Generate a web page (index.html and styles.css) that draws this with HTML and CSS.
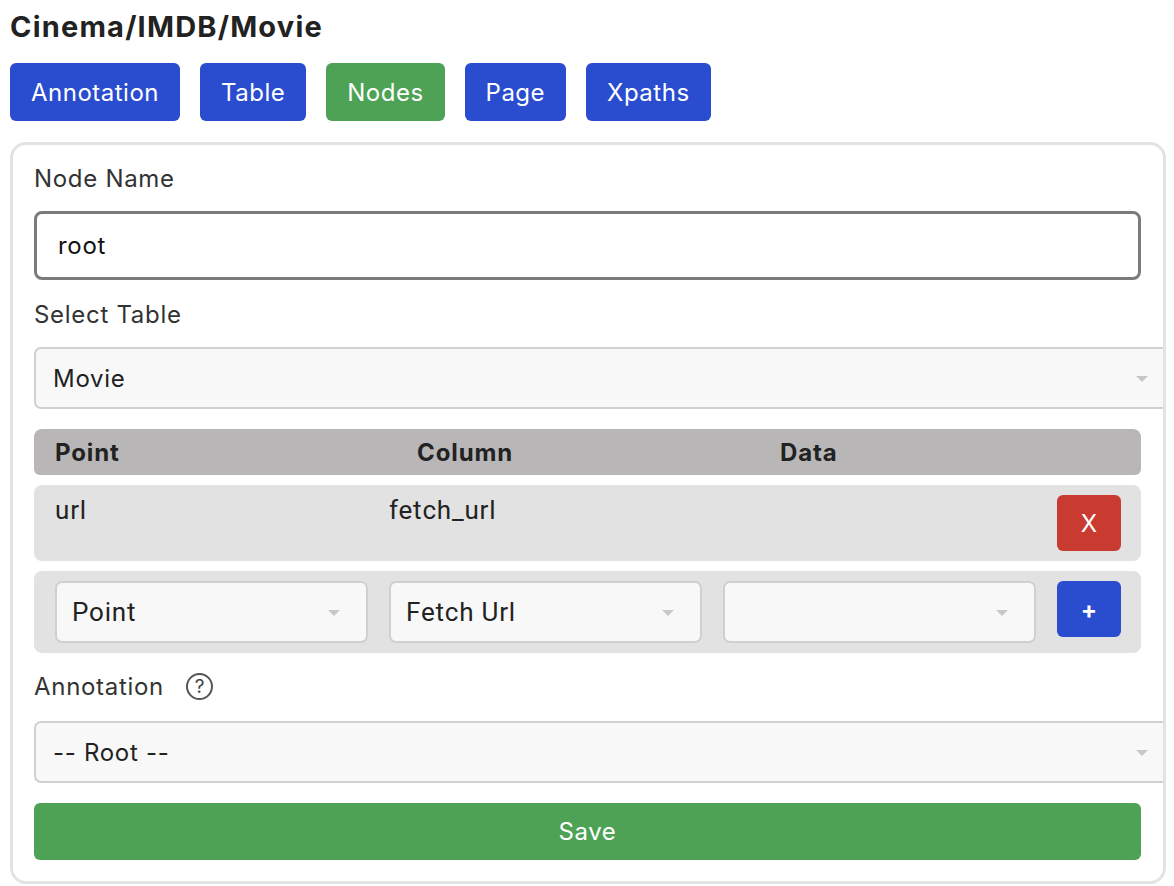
FILE: index.html
```html
<!DOCTYPE html>
<html lang="en">
<head>
<meta charset="utf-8">
<title>Cinema/IMDB/Movie</title>
<link rel="stylesheet" href="styles.css">
</head>
<body>
  <h1 class="title">Cinema/IMDB/Movie</h1>
  <nav class="tabs">
    <button class="btn btn-blue">Annotation</button>
    <button class="btn btn-blue">Table</button>
    <button class="btn btn-green">Nodes</button>
    <button class="btn btn-blue">Page</button>
    <button class="btn btn-blue">Xpaths</button>
  </nav>
  <main class="card">
    <label class="field-label">Node Name</label>
    <div class="text-input">root</div>

    <label class="field-label label-gap">Select Table</label>
    <div class="select select-wide"><span>Movie</span></div>

    <div class="table-head">
      <span>Point</span>
      <span>Column</span>
      <span>Data</span>
    </div>
    <div class="row data-row">
      <span class="cell">url</span>
      <span class="cell">fetch_url</span>
      <span class="cell"></span>
      <button class="sq-btn sq-red">X</button>
    </div>
    <div class="row input-row">
      <div class="select select-small"><span>Point</span></div>
      <div class="select select-small"><span>Fetch Url</span></div>
      <div class="select select-small"><span></span></div>
      <button class="sq-btn sq-blue">+</button>
    </div>

    <div class="field-label annot-label">
      <span>Annotation</span>
      <span class="help">?</span>
    </div>
    <div class="select select-wide"><span>-- Root --</span></div>

    <button class="save">Save</button>
  </main>
</body>
</html>
```

FILE: styles.css
```css
* { box-sizing: border-box; }

body {
  margin: 0;
  padding: 0 8px 0 10px;
  background: #ffffff;
  font-family: Inter, "Noto Sans", sans-serif;
  color: #333;
  letter-spacing: 0.7px;
}

.title {
  margin: 10px 0 0;
  font-size: 29px;
  line-height: 34px;
  font-weight: 700;
  color: #222;
  letter-spacing: 1.2px;
}

.tabs {
  display: flex;
  gap: 20px;
  margin-top: 19px;
}

.btn {
  height: 58px;
  padding: 0 21px;
  border: none;
  border-radius: 6px;
  font-family: Inter, sans-serif;
  font-size: 24px;
  letter-spacing: 0.5px;
  color: #fff;
  cursor: pointer;
}
.btn-blue { background: #2a4ccf; }
.btn-green { background: #4ea255; }

.card {
  margin-top: 21px;
  border: 3px solid #e3e3e3;
  border-radius: 16px;
  padding: 19px 22px 21px 21px;
  overflow: hidden;
  display: flex;
  flex-direction: column;
}

.field-label {
  font-size: 24px;
  line-height: 29px;
  color: #333;
}
.label-gap { margin-top: 20px; }

.text-input {
  margin-top: 18px;
  height: 69px;
  border: 3px solid #7b7b7b;
  border-radius: 8px;
  padding: 0 21px;
  display: flex;
  align-items: center;
  font-size: 24px;
  color: #111;
}

.select {
  position: relative;
  height: 62px;
  background: #f8f8f8;
  border: 2px solid #d0d0d0;
  border-radius: 7px;
  display: flex;
  align-items: center;
  font-size: 24px;
  color: #222;
}
.select::after {
  content: "";
  position: absolute;
  right: 26px;
  top: 50%;
  margin-top: -2px;
  border-left: 6px solid transparent;
  border-right: 6px solid transparent;
  border-top: 6px solid #c8c8c8;
}
.select-wide {
  margin-top: 18px;
  width: calc(100% + 35px);
  padding-left: 17px;
}
.select-small {
  padding-left: 15px;
  font-family: Roboto, sans-serif;
  font-size: 26px;
  letter-spacing: 0.8px;
}

.table-head {
  margin-top: 20px;
  height: 46px;
  background: #b8b6b7;
  border-radius: 8px 8px 6px 6px;
  display: grid;
  grid-template-columns: 362px 363px 1fr;
  align-items: center;
  padding: 0 21px;
  font-size: 24px;
  font-weight: 700;
  letter-spacing: 0.9px;
  color: #222;
}

.row {
  margin-top: 10px;
  background: #e2e2e2;
  border-radius: 8px;
  display: grid;
  grid-template-columns: 1fr 1fr 1fr 64px;
  column-gap: 21px;
  padding: 10px 20px 10px 21px;
  align-items: start;
}
.data-row { height: 76px; }
.data-row .cell {
  font-family: Roboto, sans-serif;
  font-size: 26px;
  letter-spacing: 0.8px;
  line-height: 30px;
  color: #222;
}

.sq-btn {
  width: 64px;
  height: 56px;
  border: none;
  border-radius: 6px;
  color: #fff;
  font-family: Inter, sans-serif;
  font-size: 24px;
  cursor: pointer;
  padding: 0;
}
.sq-red { background: #c93a30; }
.sq-blue { background: #2a4ccf; font-weight: 700; }

.annot-label {
  margin-top: 19px;
  display: flex;
  align-items: center;
  gap: 22px;
}
.help {
  width: 27px;
  height: 27px;
  border: 2px solid #555;
  border-radius: 50%;
  display: flex;
  align-items: center;
  justify-content: center;
  font-size: 19px;
  line-height: 1;
  letter-spacing: 0;
  color: #444;
}
.annot-label + .select-wide { margin-top: 20px; }

.save {
  margin-top: 20px;
  height: 57px;
  border: none;
  border-radius: 6px;
  background: #4ea255;
  color: #fff;
  font-family: Inter, sans-serif;
  font-size: 24px;
  letter-spacing: 0.6px;
  cursor: pointer;
}
```
